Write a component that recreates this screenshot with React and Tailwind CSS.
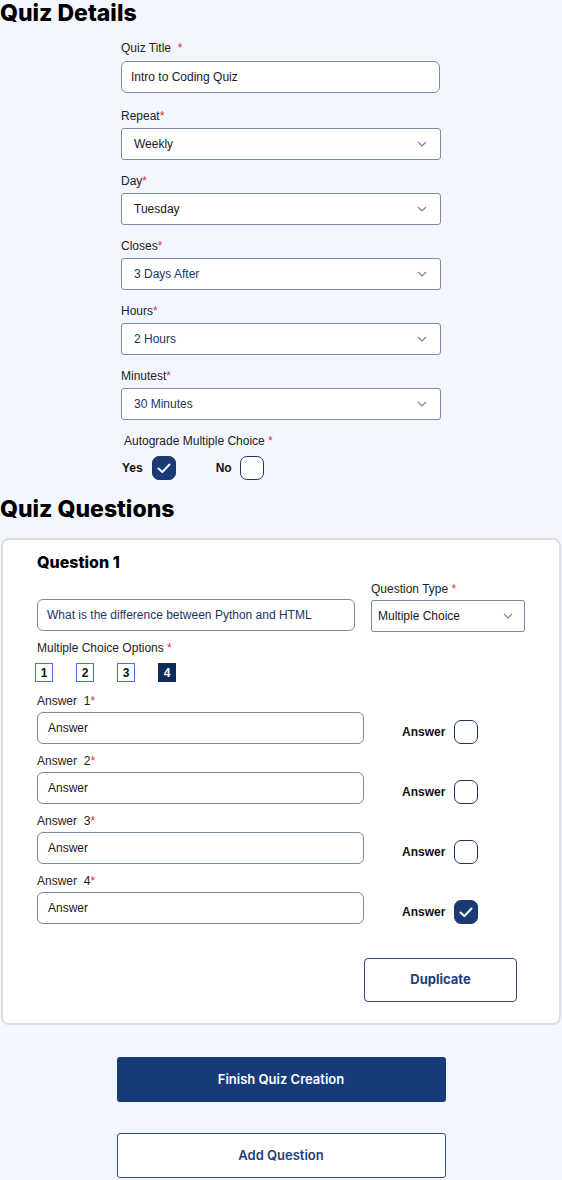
import React from "react";

const HEAD = "font-['Inter',sans-serif]";
const BODY = "font-['Liberation_Sans',Arial,sans-serif]";

const Star = () => <span className="text-[#d33]">*</span>;

const Chevron = () => (
  <svg width="10" height="6" viewBox="0 0 10 6" fill="none">
    <path d="M1 1l4 4 4-4" stroke="#7484a3" strokeWidth="1.2" />
  </svg>
);

const Check = ({ checked }) => (
  <div
    className={`w-[24px] h-[24px] rounded-[7px] border-[1.5px] border-[#1d3563] flex items-center justify-center ${
      checked ? "bg-[#183b78]" : "bg-white"
    }`}
  >
    {checked && (
      <svg width="14" height="11" viewBox="0 0 14 11" fill="none">
        <path d="M1.5 5.5l3.8 3.6L12.5 1.5" stroke="white" strokeWidth="2" strokeLinecap="round" strokeLinejoin="round" />
      </svg>
    )}
  </div>
);

const SelectField = ({ label, value, navy }) => (
  <div className="mb-[14px]">
    <div className="text-[12px] leading-[14px] text-[#222] mb-[5px]">
      {label}
      <Star />
    </div>
    <div className="h-[32px] w-[320px] bg-white border border-[#7d8aa6] rounded-[3px] flex items-center justify-between pl-[12px] pr-[13px]">
      <span className={`text-[12px] ${navy ? "text-[#1d3563]" : "text-[#1a1a1a]"}`}>{value}</span>
      <Chevron />
    </div>
  </div>
);

const AnswerRow = ({ n, checked }) => (
  <div className="mb-[10px]">
    <div className="text-[12px] leading-[14px] text-[#222] mb-[4px]">
      Answer&nbsp; {n}
      <Star />
    </div>
    <div className="flex items-start">
      <div className="h-[32px] w-[327px] bg-white border border-[#7d8aa6] rounded-[6px] flex items-center pl-[10px] text-[12px] text-[#1a1a1a]">
        Answer
      </div>
      <div className="flex items-center mt-[8px] ml-[38px] gap-[9px]">
        <span className="text-[12px] font-bold text-[#111]">Answer</span>
        <Check checked={checked} />
      </div>
    </div>
  </div>
);

const App = () => {
  return (
    <div className={`${BODY} bg-[#f3f6fe] min-h-[1180px] w-[562px] overflow-hidden`}>
      <h1 className={`${HEAD} text-[23px] leading-[26px] font-extrabold text-black`}>Quiz Details</h1>

      <div className="w-[320px] mx-auto mt-[15px]">
        <div className="mb-[16px]">
          <div className="text-[12px] leading-[14px] text-[#222] mb-[6px]">
            Quiz Title&nbsp;&nbsp;<Star />
          </div>
          <div className="h-[32px] w-[319px] bg-white border border-[#7d8aa6] rounded-[6px] flex items-center pl-[9px] text-[12px] text-[#1a1a1a]">
            Intro to Coding Quiz
          </div>
        </div>

        <SelectField label="Repeat" value="Weekly" />
        <SelectField label="Day" value="Tuesday" />
        <SelectField label="Closes" value="3 Days After" navy />
        <SelectField label="Hours" value="2 Hours" navy />
        <SelectField label="Minutest" value="30 Minutes" navy />

        <div className="mt-[3px] pl-[3px] text-[12px] leading-[14px] text-[#222]">
          Autograde Multiple Choice <Star />
        </div>
        <div className="flex items-center mt-[8px] pl-[1px]">
          <span className="text-[12px] font-bold text-[#111] mr-[9px]">Yes</span>
          <Check checked />
          <span className="text-[12px] font-bold text-[#111] ml-[40px] mr-[8px]">No</span>
          <Check />
        </div>
      </div>

      <h2 className={`${HEAD} text-[23px] leading-[26px] font-extrabold text-black mt-[16px]`}>Quiz Questions</h2>

      <div className="mx-px mt-[16px] bg-white border-2 border-[#dedede] rounded-[8px] pl-[34px] pr-[34px] pt-[12px] pb-[21px]">
        <h3 className={`${HEAD} text-[16px] leading-[20px] font-extrabold text-black`}>Question 1</h3>

        <div className="flex items-end mt-[10px]">
          <div className="h-[32px] w-[318px] bg-white border border-[#7d8aa6] rounded-[6px] flex items-center pl-[9px] text-[12px] text-[#1d3563] mb-[1px]">
            What is the difference between Python and HTML
          </div>
          <div className="ml-[16px]">
            <div className="text-[12px] leading-[14px] text-[#222] mb-[4px]">
              Question Type <Star />
            </div>
            <div className="h-[32px] w-[154px] bg-white border border-[#7d8aa6] rounded-[2px] flex items-center justify-between pl-[6px] pr-[11px]">
              <span className="text-[12px] text-[#1a1a1a]">Multiple Choice</span>
              <Chevron />
            </div>
          </div>
        </div>

        <div className="text-[12px] leading-[14px] text-[#222] mt-[9px]">
          Multiple Choice Options <Star />
        </div>
        <div className="flex gap-[23px] mt-[8px] -ml-[2px]">
          {[1, 2, 3].map((n) => (
            <div
              key={n}
              className="w-[18px] h-[19px] border-[1.5px] border-[#4a6cf0] bg-white flex items-center justify-center text-[12px] font-bold text-[#111]"
            >
              {n}
            </div>
          ))}
          <div className="w-[18px] h-[19px] bg-[#0e2a5a] flex items-center justify-center text-[12px] font-bold text-white">
            4
          </div>
        </div>

        <div className="mt-[12px]">
          <AnswerRow n={1} />
          <AnswerRow n={2} />
          <AnswerRow n={3} />
          <AnswerRow n={4} checked />
        </div>

        <div className="flex justify-end mt-[34px] pr-[8px]">
          <button className={`${HEAD} w-[153px] h-[44px] bg-white border-[1.5px] border-[#2c4d87] rounded-[4px] text-[13px] font-bold text-[#1d3f7c]`}>
            Duplicate
          </button>
        </div>
      </div>

      <div className="flex flex-col items-center mt-[32px] gap-[31px]">
        <button className={`${HEAD} w-[329px] h-[45px] bg-[#173b79] rounded-[3px] text-[13px] font-semibold text-white`}>
          Finish Quiz Creation
        </button>
        <button className={`${HEAD} w-[329px] h-[45px] bg-white border-[1.5px] border-[#2c4d87] rounded-[3px] text-[13px] font-semibold text-[#1d3f7c]`}>
          Add Question
        </button>
      </div>
    </div>
  );
};

export default App;
